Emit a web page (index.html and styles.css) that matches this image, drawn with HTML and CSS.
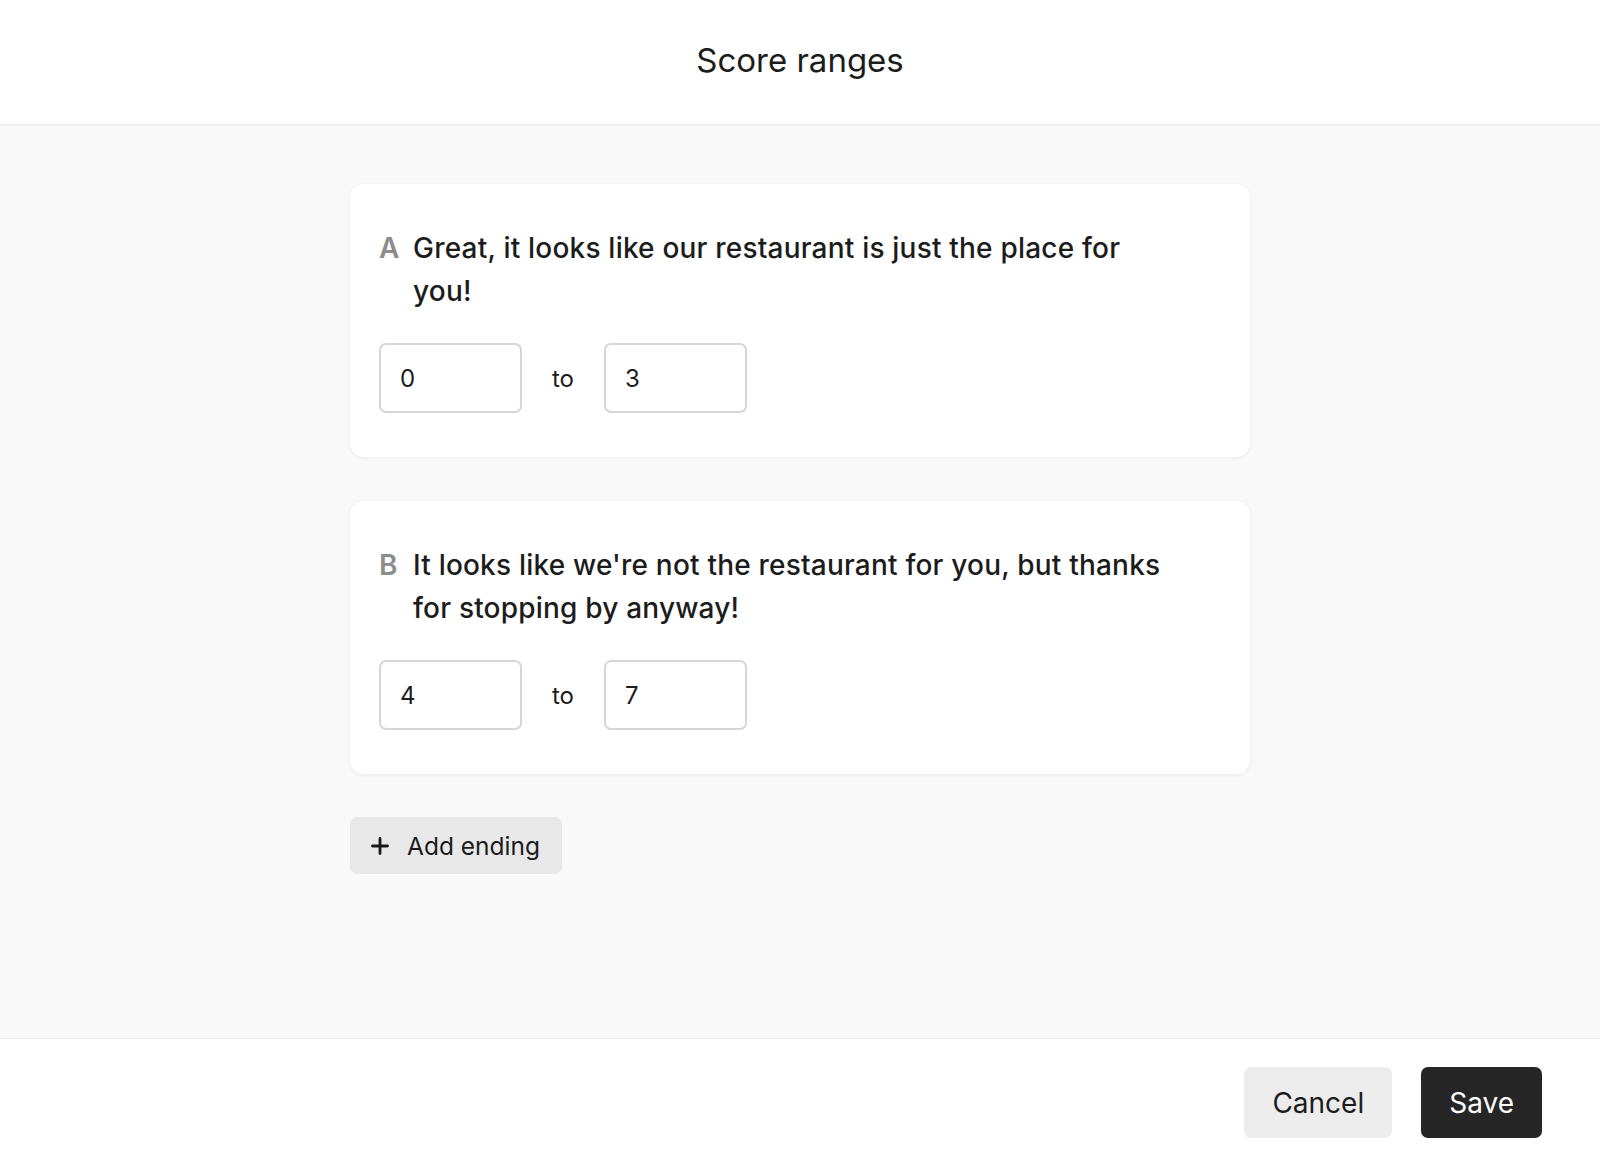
FILE: index.html
```html
<!DOCTYPE html>
<html lang="en">
<head>
<meta charset="utf-8">
<title>Score ranges</title>
<link rel="stylesheet" href="styles.css">
</head>
<body>
<div class="page">
  <header class="header">
    <h1 class="title">Score ranges</h1>
  </header>
  <main class="main">
    <div class="container">
      <section class="card">
        <div class="ending">
          <span class="letter">A</span>
          <p class="ending-text">Great, it looks like our restaurant is just the place for you!</p>
        </div>
        <div class="range">
          <div class="field">0</div>
          <span class="to">to</span>
          <div class="field">3</div>
        </div>
      </section>
      <section class="card">
        <div class="ending">
          <span class="letter">B</span>
          <p class="ending-text">It looks like we're not the restaurant for you, but thanks for stopping by anyway!</p>
        </div>
        <div class="range">
          <div class="field">4</div>
          <span class="to">to</span>
          <div class="field">7</div>
        </div>
      </section>
      <button class="add-btn" type="button">
        <svg class="plus" width="18" height="18" viewBox="0 0 18 18" aria-hidden="true">
          <path d="M9 1.5v15M1.5 9h15" stroke="#1a1a1a" stroke-width="2.8" stroke-linecap="round" fill="none"/>
        </svg>
        <span>Add ending</span>
      </button>
    </div>
  </main>
  <footer class="footer">
    <button class="btn btn-cancel" type="button">Cancel</button>
    <button class="btn btn-save" type="button">Save</button>
  </footer>
</div>
</body>
</html>
```

FILE: styles.css
```css
* { box-sizing: border-box; }

html, body {
  margin: 0;
  padding: 0;
}

body {
  font-family: Inter, "Noto Sans", "Liberation Sans", sans-serif;
  color: #1c1c1c;
  background: #ffffff;
}

.page {
  height: 1162px;
  display: flex;
  flex-direction: column;
}

.header {
  height: 126px;
  flex: 0 0 126px;
  border-bottom: 2px solid #efefef;
  display: flex;
  align-items: center;
  justify-content: center;
  background: #fff;
}

.title {
  margin: 0;
  font-size: 33px;
  font-weight: 400;
  color: #1c1c1c;
  padding-bottom: 4px;
}

.main {
  flex: 1;
  background: #f9f9f9;
  padding-top: 58px;
}

.container {
  width: 900px;
  margin: 0 auto;
  display: flex;
  flex-direction: column;
  align-items: flex-start;
  gap: 44px;
}

.card {
  width: 100%;
  background: #fff;
  border-radius: 14px;
  padding: 43px 29px 44px;
  box-shadow: 0 1px 4px rgba(0, 0, 0, 0.06);
}

.ending {
  display: flex;
  align-items: flex-start;
}

.letter {
  flex: 0 0 34px;
  font-size: 28px;
  line-height: 43px;
  font-weight: 600;
  color: #8c8c8c;
}

.ending-text {
  margin: 0;
  max-width: 756px;
  font-size: 28px;
  line-height: 43px;
  font-weight: 500;
  letter-spacing: 0.2px;
  color: #1c1c1c;
}

.range {
  margin-top: 30px;
  display: flex;
  align-items: center;
}

.field {
  width: 143px;
  height: 70px;
  border: 2px solid #d6d6d6;
  border-radius: 7px;
  padding-left: 19px;
  display: flex;
  align-items: center;
  font-size: 24px;
  color: #1c1c1c;
  background: #fff;
}

.to {
  margin: 0 30px;
  font-size: 24px;
  color: #1c1c1c;
}

.add-btn {
  margin-top: -1px;
  height: 57px;
  padding: 0 22px 0 21px;
  border: none;
  border-radius: 7px;
  background: #e8e8e8;
  display: flex;
  align-items: center;
  gap: 18px;
  font-family: inherit;
  font-size: 24.5px;
  color: #1c1c1c;
}

.plus {
  display: block;
}

.footer {
  flex: 0 0 124px;
  border-top: 1px solid #ebebeb;
  background: #fff;
  display: flex;
  justify-content: flex-end;
  align-items: flex-start;
  gap: 29px;
  padding: 28px 58px 0 0;
}

.btn {
  height: 71px;
  border: none;
  border-radius: 7px;
  font-family: inherit;
  font-size: 28px;
  padding: 0 28px;
}

.btn-cancel {
  background: #ececec;
  color: #1c1c1c;
}

.btn-save {
  background: #262626;
  color: #fff;
}
```
